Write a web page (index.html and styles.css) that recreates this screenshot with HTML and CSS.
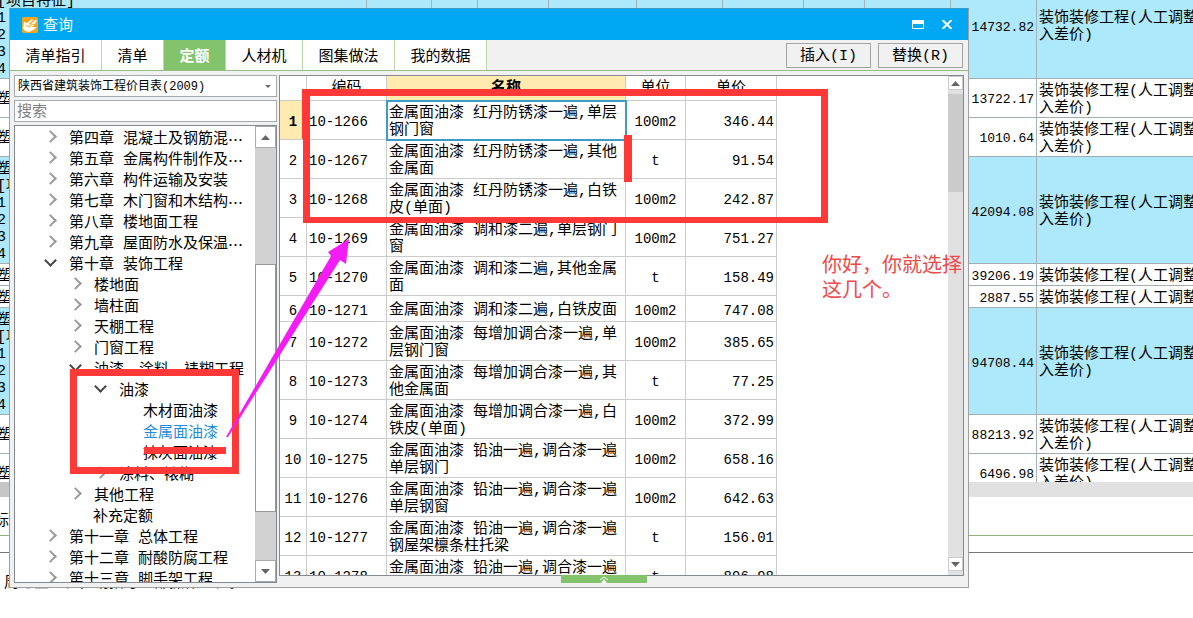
FILE: index.html
```
<!DOCTYPE html>
<html lang="zh-CN">
<head>
<meta charset="utf-8">
<title>查询</title>
<link rel="stylesheet" href="styles.css">
</head>
<body>
<main class="page">
  <section class="sheet">
    <table class="sheet-table">
      <colgroup><col class="s1"><col class="s2"><col class="s3"><col class="s4"><col class="s5"><col class="s6"><col class="s7"><col class="s8"><col class="s9"><col class="s10"><col class="s11"></colgroup>
      <tbody>
        <tr class="blue"><td>塑<br>[项目特征]<br>1.<br>2.<br>3.<br>4.</td><td></td><td></td><td></td><td></td><td></td><td></td><td></td><td></td><td class="num">14732.82</td><td>装饰装修工程(人工调整<br>入差价)</td></tr>
        <tr class="two"><td>塑</td><td></td><td></td><td></td><td></td><td></td><td></td><td></td><td></td><td class="num">13722.17</td><td>装饰装修工程(人工调整<br>入差价)</td></tr>
        <tr class="two"><td>塑</td><td></td><td></td><td></td><td></td><td></td><td></td><td></td><td></td><td class="num">1010.64</td><td>装饰装修工程(人工调整<br>入差价)</td></tr>
        <tr class="blue tall"><td>塑<br>[项<br>1.<br>2.<br>3.<br>4.</td><td></td><td></td><td></td><td></td><td></td><td></td><td></td><td></td><td class="num">42094.08</td><td>装饰装修工程(人工调整<br>入差价)</td></tr>
        <tr class="one"><td>塑</td><td></td><td></td><td></td><td></td><td></td><td></td><td></td><td></td><td class="num">39206.19</td><td>装饰装修工程(人工调整</td></tr>
        <tr class="one"><td>塑</td><td></td><td></td><td></td><td></td><td></td><td></td><td></td><td></td><td class="num">2887.55</td><td>装饰装修工程(人工调整</td></tr>
        <tr class="blue tall"><td>塑<br>[项<br>1.<br>2.<br>3.<br>4.</td><td></td><td></td><td></td><td></td><td></td><td></td><td></td><td></td><td class="num">94708.44</td><td>装饰装修工程(人工调整<br>入差价)</td></tr>
        <tr class="two"><td>塑</td><td></td><td></td><td></td><td></td><td></td><td></td><td></td><td></td><td class="num">88213.92</td><td>装饰装修工程(人工调整<br>入差价)</td></tr>
        <tr class="two"><td>塑</td><td></td><td></td><td></td><td></td><td></td><td></td><td></td><td></td><td class="num">6496.98</td><td>装饰装修工程(人工调整<br>入差价)</td></tr>
      </tbody>
    </table>
  </section>
  <div class="sheet-scroll"></div>
  <div class="sheet-tabs">标准</div>
  <div class="sheet-gap"></div>
  <p class="sheet-note">周这些工程，请指导全部操作过程。</p>

  <section class="dialog" aria-label="查询">
    <header class="titlebar">
      <svg class="logo" viewBox="0 0 16 16"><rect width="16" height="16" rx="2" fill="#f9a51c"/><path d="M2 5l3 1 5-4 1 1-4 4 1 1 5-5 2 1-5 6 4 0-1 2-6 3-4-1-2-3z" fill="#fff"/><path d="M4 8l3 2 4-3" stroke="#f9a51c" fill="none"/></svg>
      <h1>查询</h1>
      <button class="win" aria-label="最大化"><svg viewBox="0 0 12 9"><path d="M.5.5h11v8H.5z" fill="none" stroke="#fff"/><path d="M0 0h12v4H0z" fill="#fff"/></svg></button>
      <button class="win" aria-label="关闭"><svg viewBox="0 0 12 9"><path d="M1.500 0l9 9M10.500 0l-9 9" fill="none" stroke="#fff" stroke-width="2"/></svg></button>
    </header>
    <nav class="toolbar">
      <button class="tab wide">清单指引</button><button class="tab">清单</button><button class="tab active">定额</button><button class="tab mid">人材机</button><button class="tab wide">图集做法</button><button class="tab wide">我的数据</button>
      <span class="grow"></span>
      <button class="action">插入(I)</button><button class="action">替换(R)</button>
    </nav>
    <div class="content">
      <aside class="side">
        <div class="combo"><select aria-label="定额库"><option>陕西省建筑装饰工程价目表(2009)</option></select><svg viewBox="0 0 6 3"><path d="M0 0h6L3 3z" fill="#666"/></svg></div>
        <input class="search" type="text" placeholder="搜索" aria-label="搜索">
        <div class="treebox">
          <ul class="tree">
            <li class="closed">第四章 混凝土及钢筋混<span class="dots">…</span></li>
            <li class="closed">第五章 金属构件制作及<span class="dots">…</span></li>
            <li class="closed">第六章 构件运输及安装</li>
            <li class="closed">第七章 木门窗和木结构<span class="dots">…</span></li>
            <li class="closed">第八章 楼地面工程</li>
            <li class="closed">第九章 屋面防水及保温<span class="dots">…</span></li>
            <li class="open">第十章 装饰工程</li>
            <li class="closed l2">楼地面</li>
            <li class="closed l2">墙柱面</li>
            <li class="closed l2">天棚工程</li>
            <li class="closed l2">门窗工程</li>
            <li class="open l2">油漆、涂料、裱糊工程</li>
            <li class="open l3">油漆</li>
            <li class="l4">木材面油漆</li>
            <li class="l4 picked">金属面油漆</li>
            <li class="l4">抹灰面油漆</li>
            <li class="closed l3">涂料、裱糊</li>
            <li class="closed l2">其他工程</li>
            <li class="l2">补充定额</li>
            <li class="closed">第十一章 总体工程</li>
            <li class="closed">第十二章 耐酸防腐工程</li>
            <li class="closed">第十三章 脚手架工程</li>
          </ul>
          <div class="vbar">
            <button aria-label="向上滚动"><svg viewBox="0 0 9 5"><path d="M0 5h9L4.500 0z" fill="#666"/></svg></button>
            <span class="track-a"></span><span class="thumb"></span><span class="track-b"></span>
            <button aria-label="向下滚动"><svg viewBox="0 0 9 5"><path d="M0 0h9L4.500 5z" fill="#666"/></svg></button>
          </div>
        </div>
      </aside>
      <section class="gridbox">
        <div class="gridscroll">
        <table class="grid">
          <colgroup><col class="g1"><col class="g2"><col class="g3"><col class="g4"><col class="g5"></colgroup>
          <thead><tr><th></th><th>编码</th><th class="hot">名称</th><th>单位</th><th>单价</th></tr></thead>
          <tbody>
            <tr><th class="hot">1</th><td>10-1266</td><td class="name focus">金属面油漆 红丹防锈漆一遍,单层钢门窗</td><td>100m2</td><td>346.44</td></tr>
            <tr><th>2</th><td>10-1267</td><td class="name">金属面油漆 红丹防锈漆一遍,其他金属面</td><td>t</td><td>91.54</td></tr>
            <tr><th>3</th><td>10-1268</td><td class="name">金属面油漆 红丹防锈漆一遍,白铁皮(单面)</td><td>100m2</td><td>242.87</td></tr>
            <tr><th>4</th><td>10-1269</td><td class="name">金属面油漆 调和漆二遍,单层钢门窗</td><td>100m2</td><td>751.27</td></tr>
            <tr><th>5</th><td>10-1270</td><td class="name">金属面油漆 调和漆二遍,其他金属面</td><td>t</td><td>158.49</td></tr>
            <tr class="short"><th>6</th><td>10-1271</td><td class="name">金属面油漆 调和漆二遍,白铁皮面</td><td>100m2</td><td>747.08</td></tr>
            <tr><th>7</th><td>10-1272</td><td class="name">金属面油漆 每增加调合漆一遍,单层钢门窗</td><td>100m2</td><td>385.65</td></tr>
            <tr><th>8</th><td>10-1273</td><td class="name">金属面油漆 每增加调合漆一遍,其他金属面</td><td>t</td><td>77.25</td></tr>
            <tr><th>9</th><td>10-1274</td><td class="name">金属面油漆 每增加调合漆一遍,白铁皮(单面)</td><td>100m2</td><td>372.99</td></tr>
            <tr><th>10</th><td>10-1275</td><td class="name">金属面油漆 铅油一遍,调合漆一遍 单层钢门</td><td>100m2</td><td>658.16</td></tr>
            <tr><th>11</th><td>10-1276</td><td class="name">金属面油漆 铅油一遍,调合漆一遍 单层钢窗</td><td>100m2</td><td>642.63</td></tr>
            <tr><th>12</th><td>10-1277</td><td class="name">金属面油漆 铅油一遍,调合漆一遍 钢屋架檩条柱托梁</td><td>t</td><td>156.01</td></tr>
            <tr><th>13</th><td>10-1278</td><td class="name">金属面油漆 铅油一遍,调合漆一遍 其他金属面</td><td>t</td><td>896.98</td></tr>
          </tbody>
        </table>
        </div>
        <div class="vbar slim">
          <button aria-label="向上滚动"><svg viewBox="0 0 9 5"><path d="M0 5h9L4.500 0z" fill="#666"/></svg></button>
          <span class="thumb"></span><span class="track-b"></span>
          <button aria-label="向下滚动"><svg viewBox="0 0 9 5"><path d="M0 0h9L4.500 5z" fill="#666"/></svg></button>
        </div>
      </section>
    </div>
    <button class="handle" aria-label="展开"><svg viewBox="0 0 10 7"><path d="M1 4l4-3 4 3" fill="none" stroke="#fff"/><path d="M5 3l3 4H2z" fill="#fff"/></svg></button>
  </section>

  <svg class="marks" width="840" height="480" viewBox="0 0 840 480">
    <path d="M302 89h526v134H303v-84h-1zM310 96v121h511V96z" fill="#ff3838" fill-rule="evenodd"/>
    <path d="M624 135h8v47h-8zM144 447h82v7h-82z" fill="#ff3838"/>
    <path d="M70 369h169v105H70zM77 376v91h155v-91z" fill="#ff3838" fill-rule="evenodd"/>
    <path d="M226 437L331 256l-3-4 21-13-3 25-6-4-112 177z" fill="#f41cf4"/>
  </svg>
  <p class="remark">你好，你就选择<br>这几个。</p>
</main>
</body>
</html>
```
FILE: styles.css
```
* { box-sizing: border-box; }
body {
  margin: 0;
  background: #fff;
  color: #000;
  font: 15px/17px "Liberation Mono", "Noto Sans CJK SC", monospace;
}
button, input, select { font: inherit; color: inherit; margin: 0; padding: 0; border: 0; border-radius: 0; background: none; }
h1, p, ul { margin: 0; padding: 0; font-weight: normal; }
table { border-collapse: separate; border-spacing: 0; table-layout: fixed; }
svg { display: block; }

.page { position: relative; height: 100vh; overflow: hidden; }

/* worksheet behind the dialog */
.sheet { height: 482px; overflow: hidden; }
.sheet-table { width: calc(100% + 16px); margin: -24px 0 0 -3px; }
.sheet-table td {
  height: 39px;
  padding: 3px 2px 0;
  border-right: 1px solid #a3b3b8;
  border-bottom: 1px solid #a3aeb2;
  white-space: nowrap;
  overflow: hidden;
}
.sheet-table td:first-child { padding-left: 0; }
.sheet-table .blue td { height: 103px; padding-top: 0; background: #aee9fb; }
.sheet-table .tall td { height: 107px; padding-top: 4px; }
.sheet-table .one td { height: 22px; }
.sheet-table .num { text-align: right; font-size: 13px; }
.s1 { width: 370px; }
.s2 { width: 65px; }
.s3 { width: 46px; }
.s4 { width: 71px; }
.s5 { width: 88px; }
.s6 { width: 86px; }
.s7 { width: 81px; }
.s8 { width: 61px; }
.s9 { width: 86px; }
.s10 { width: 86px; }
.sheet-scroll { height: 15px; background: linear-gradient(to right, #c6c6c6 50%, #e1e1e1 50%); }
.sheet-tabs { height: 39px; padding-top: 16px; border-bottom: 1px solid #8db37d; text-indent: -6px; }
.sheet-gap { height: 17px; border-bottom: 1px solid #777; }
.sheet-note { padding: 22px 0 0 4px; }

/* dialog window */
.dialog {
  position: absolute;
  inset: 8px 224px 30px 9px;
  display: flex;
  flex-direction: column;
  border: 1px solid #a0a0a0;
  border-top-color: #3d9cc8;
  background: #f1f1f1;
}
.titlebar { display: flex; flex: none; align-items: center; height: 31px; padding: 0 10px 0 12px; background: #00a8f3; color: #fff; }
.titlebar h1 { flex: 1; padding: 3px 0 0 5px; font-size: 15px; line-height: 17px; }
.logo { width: 16px; height: 16px; }
.win { width: 22px; margin-left: 7px; padding: 0 5px; }
.win svg { width: 12px; height: 9px; }
.toolbar { display: flex; flex: none; height: 31px; padding-right: 5px; border-bottom: 1px solid #93bd83; }
.tab { width: 62px; padding-top: 4px; background: #fff; border-right: 1px solid #b9dba9; }
.tab.wide { width: 92px; }
.tab.mid { width: 77px; }
.tab.active { background: #82c36c; color: #fff; font-weight: bold; }
.grow { flex: 1; }
.action { width: 85px; height: 25px; margin: 3px 0 0 7px; padding-top: 2px; border: 1px solid #a3a3a3; }
.content { display: flex; flex: 1; min-height: 0; padding: 4px; gap: 2px; }
.side { display: flex; flex-direction: column; gap: 3px; width: 263px; }
.combo { position: relative; height: 22px; border: 1px solid #a5a9b0; background: #fff; }
.combo select { width: 100%; height: 20px; padding: 2px 0 0 3px; appearance: none; font-size: 12px; background: #fff; }
.combo svg { position: absolute; right: 5px; top: 9px; width: 6px; height: 3px; }
.search { height: 22px; padding: 2px 2px 0; border: 1px solid #a5a9b0; background: #fff; }
.search::placeholder { color: #808080; opacity: 1; }
.treebox { display: flex; flex: 1; min-height: 0; border: 1px solid #858a92; background: #fff; overflow: hidden; }
.tree { flex: 1; padding-top: 3px; list-style: none; overflow: hidden; white-space: nowrap; }
.tree li { height: 21px; padding-left: 53px; line-height: 21px; }
.tree .l2 { padding-left: 78px; }
.tree .l3 { padding-left: 103px; }
.tree .l4 { padding-left: 128px; }
.tree .picked { color: #1c8be0; }
.dots { display: inline-block; height: 21px; vertical-align: top; font-family: "Noto Sans CJK SC", sans-serif; }
.tree .closed::before, .tree .open::before {
  content: "";
  display: inline-block;
  width: 7px;
  height: 7px;
  margin: 0 14px 2px -22px;
  border: solid #9a9a9a;
  border-width: 2px 2px 0 0;
  transform: rotate(45deg);
}
.tree .open::before { margin-bottom: 4px; border-color: #444; transform: rotate(135deg); }

.vbar { display: flex; flex-direction: column; width: 21px; background: #d2d2d2; }
.vbar button { display: grid; place-items: center; height: 22px; border: 1px solid #aaa; background: #fff; }
.vbar button svg { width: 9px; height: 5px; }
.vbar .track-a { flex: 117; }
.vbar .thumb { flex: 249; border: 1px solid #999; background: #fff; }
.vbar .track-b { flex: 48; }

.gridbox { display: flex; flex: 1; min-width: 0; margin-bottom: 7px; border: 1px solid #858a92; background: #fff; overflow: hidden; }
.gridscroll { flex: 1; overflow: hidden; }
.grid { width: 497px; }
.grid th, .grid td {
  height: 39px;
  padding: 5px 0 0;
  border-right: 1px solid #ccc;
  border-bottom: 1px solid #ccc;
  font-size: 14px;
  font-weight: normal;
  text-align: center;
}
.grid thead th { height: 25px; padding: 0; font-size: 15px; }
.grid .hot { background: #ffeab0; font-weight: bold; }
.grid td:nth-child(2) { padding-left: 2px; text-align: left; }
.grid td:last-child { padding-right: 2px; text-align: right; }
.grid .name { padding: 4px 0 0 2px; font-size: 15px; text-align: left; }
.grid .focus { outline: 2px solid #3d9dc8; outline-offset: -1px; }
.grid .short th, .grid .short td { height: 26px; }
.g1 { width: 27px; }
.g2 { width: 80px; }
.g3 { width: 239px; }
.g4 { width: 60px; }
.g5 { width: 91px; }
.vbar.slim { width: 15px; background: #e1e1e1; padding-bottom: 4px; }
.vbar.slim button { height: 14px; border-color: #ccc; }
.vbar.slim .thumb { flex: 98; margin-top: 4px; border: 0; background: #cbcbcb; }
.vbar.slim .track-b { flex: 365; }
.handle { position: absolute; right: 321px; bottom: 4px; width: 86px; height: 8px; background: #82c36c; }
.handle svg { width: 10px; height: 7px; margin: 0 auto; }

/* annotations over the window */
.marks { position: absolute; left: 0; top: 0; }
.remark { position: absolute; left: 822px; top: 251px; color: #f04848; font: 20px/25px "Noto Sans CJK SC", sans-serif; }
```
